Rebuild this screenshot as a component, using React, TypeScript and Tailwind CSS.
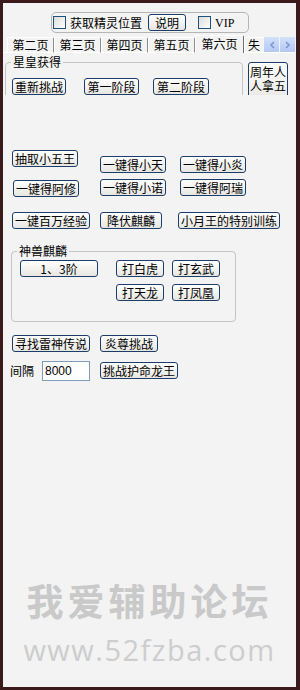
const cjk = { fontFamily: '"Noto Sans CJK SC", "Liberation Sans", sans-serif' };

const Btn = ({ label, className = "" }: { label: string; className?: string }) => (
  <div
    className={`flex h-[17px] shrink-0 items-center justify-center rounded-[3px] border border-[#1c3d6a] bg-gradient-to-b from-white to-[#e7e6e1] text-[12px] leading-none text-black ${className}`}
  >
    {label}
  </div>
);

const Check = () => (
  <div className="h-[13px] w-[13px] shrink-0 border border-[#1c5180] bg-gradient-to-br from-[#dcdcd6] to-white" />
);

const tabs = ["第二页", "第三页", "第四页", "第五页"];

export default function App() {
  return (
    <div
      className="flex h-[690px] w-[300px] flex-col overflow-hidden border-[3px] border-r-[4px] border-[#3b1a1c] bg-[#f3f3f3] text-black"
      style={cjk}
    >
      {/* top options box */}
      <div className="ml-[48px] mt-[9px] flex h-[21px] w-[198px] items-center rounded-[5px] border border-[#b5b5b5]">
        <div className="ml-[1px]">
          <Check />
        </div>
        <span className="ml-[4px] text-[12px] leading-none">获取精灵位置</span>
        <Btn label="说明" className="ml-[6px] h-[16px] w-[38px]" />
        <div className="ml-[12px]">
          <Check />
        </div>
        <span className="ml-[4px] text-[12px] leading-none" style={{ fontFamily: '"Liberation Serif", serif' }}>
          VIP
        </span>
      </div>

      {/* tab strip */}
      <div className="mt-[2px] flex h-[18px] items-end">
        <div className="w-[4px] border-b border-white" />
        {tabs.map((t) => (
          <div
            key={t}
            className="flex h-[16px] w-[47px] items-center justify-center rounded-t-[2px] border-b border-l border-r border-t border-b-white border-l-white border-r-[#8c8c8c] border-t-white text-[12px] leading-none"
          >
            {t}
          </div>
        ))}
        <div className="flex h-[18px] w-[49px] items-center justify-center rounded-t-[2px] border-l border-r border-t border-l-white border-r-[#6f6f6f] border-t-white pb-[2px] text-[12px] leading-none">
          第六页
        </div>
        <div className="flex h-[16px] w-[20px] items-center overflow-hidden border-b border-l border-t border-b-white border-l-white border-t-white pl-[3px] text-[12px] leading-none">
          失
        </div>
        <div className="flex h-[16px] items-center border-b border-white">
          <div className="flex h-[15px] w-[15px] items-center justify-center bg-gradient-to-b from-[#d2e0fb] to-[#b3c8f2]">
            <svg width="6" height="8" viewBox="0 0 6 8">
              <path d="M5 1 L2 4 L5 7" fill="none" stroke="#7d97cf" strokeWidth="1.6" />
            </svg>
          </div>
          <div className="ml-[1px] flex h-[15px] w-[15px] items-center justify-center bg-gradient-to-b from-[#d2e0fb] to-[#b3c8f2]">
            <svg width="6" height="8" viewBox="0 0 6 8">
              <path d="M1 1 L4 4 L1 7" fill="none" stroke="#7d97cf" strokeWidth="1.6" />
            </svg>
          </div>
        </div>
      </div>

      {/* clipped group area */}
      <div className="flex h-[42px] items-start overflow-hidden">
        <fieldset className="ml-[2px] mt-[3px] h-[80px] w-[238px] shrink-0 rounded-[4px] border border-[#c4c4c4]">
          <legend className="ml-[5px] px-[2px] text-[12px] leading-[12px]">星皇获得</legend>
          <div className="flex pt-[10px]">
            <Btn label="重新挑战" className="ml-[6px] w-[54px]" />
            <Btn label="第一阶段" className="ml-[18px] w-[55px]" />
            <Btn label="第二阶段" className="ml-[14px] w-[56px]" />
          </div>
        </fieldset>
        <div className="ml-[5px] mt-[9px] h-[40px] w-[40px] shrink-0 rounded-[3px] border border-[#1c3d6a] bg-gradient-to-b from-white to-[#e7e6e1] pt-[2px] text-center text-[12px] leading-[14px]">
          周年人
          <br />
          人拿五
        </div>
      </div>

      {/* button grid */}
      <div className="mt-[55px] flex items-start">
        <Btn label="抽取小五王" className="ml-[9px] w-[66px]" />
        <Btn label="一键得小天" className="ml-[22px] mt-[6px] w-[66px]" />
        <Btn label="一键得小炎" className="ml-[14px] mt-[6px] w-[66px]" />
      </div>
      <div className="mt-[6px] flex items-start">
        <Btn label="一键得阿修" className="ml-[10px] mt-[1px] w-[66px]" />
        <Btn label="一键得小诺" className="ml-[21px] w-[66px]" />
        <Btn label="一键得阿瑞" className="ml-[14px] w-[66px]" />
      </div>
      <div className="mt-[15px] flex items-start">
        <Btn label="一键百万经验" className="ml-[9px] w-[78px]" />
        <Btn label="降伏麒麟" className="ml-[10px] w-[62px]" />
        <Btn label="小月王的特别训练" className="ml-[16px] w-[102px]" />
      </div>

      {/* 神兽麒麟 group */}
      <fieldset className="ml-[8px] mt-[16px] h-[77px] w-[225px] rounded-[4px] border border-[#c4c4c4]">
        <legend className="ml-[5px] px-[2px] text-[12px] leading-[12px]">神兽麒麟</legend>
        <div className="flex items-start pt-[3px]">
          <Btn label="1、3阶" className="ml-[8px] w-[78px]" />
          <div className="ml-[18px] flex flex-col gap-[7px]">
            <div className="flex gap-[8px]">
              <Btn label="打白虎" className="w-[48px]" />
              <Btn label="打玄武" className="w-[48px]" />
            </div>
            <div className="flex gap-[8px]">
              <Btn label="打天龙" className="w-[48px]" />
              <Btn label="打凤凰" className="w-[48px]" />
            </div>
          </div>
        </div>
      </fieldset>

      <div className="mt-[13px] flex items-start">
        <Btn label="寻找雷神传说" className="ml-[9px] w-[78px]" />
        <Btn label="炎尊挑战" className="ml-[10px] w-[58px]" />
      </div>
      <div className="mt-[9px] flex items-start">
        <span className="ml-[7px] mt-[3px] text-[12px] leading-[14px]">间隔</span>
        <div
          className="ml-[8px] flex h-[20px] w-[48px] items-center border border-[#7f9db9] bg-white pl-[2px] text-[12px] leading-none"
          style={{ fontFamily: '"Liberation Sans", sans-serif' }}
        >
          8000
        </div>
        <Btn label="挑战护命龙王" className="ml-[10px] mt-[1px] w-[78px]" />
      </div>

      {/* watermark */}
      <div className="mt-[199px] flex flex-col items-center">
        <div className="text-[37px] font-bold leading-[40px] tracking-[4px] text-[#c9c9c9]">
          我爱辅助论坛
        </div>
        <div
          className="mt-[14px] text-[29px] leading-[32px] tracking-[1.5px] text-[#cdcdcd]"
          style={{ fontFamily: '"Open Sans", sans-serif' }}
        >
          www.52fzba.com
        </div>
      </div>
    </div>
  );
}
